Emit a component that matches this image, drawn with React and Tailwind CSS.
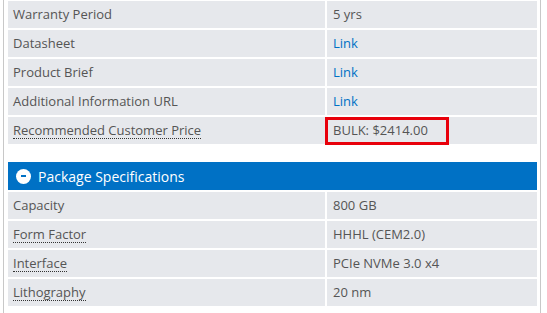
import React from "react";

const top = [
  { k: "Warranty Period", v: "5 yrs" },
  { k: "Datasheet", v: "Link", link: true },
  { k: "Product Brief", v: "Link", link: true },
  { k: "Additional Information URL", v: "Link", link: true },
  { k: "Recommended Customer Price", v: "BULK: $2414.00", dotted: true, boxed: true },
];

const pkg = [
  { k: "Capacity", v: "800 GB" },
  { k: "Form Factor", v: "HHHL (CEM2.0)", dotted: true },
  { k: "Interface", v: "PCIe NVMe 3.0 x4", dotted: true },
  { k: "Lithography", v: "20 nm", dotted: true },
];

function Row({ r }) {
  return (
    <>
      <div className="h-[27px] bg-[#e6e8ec] flex items-center pl-[5px]">
        <span
          className={
            r.dotted
              ? "leading-[15px] border-b border-dotted border-[#333]"
              : "leading-[15px]"
          }
        >
          {r.k}
        </span>
      </div>
      <div className="h-[27px] bg-[#e6e8ec] flex items-center pl-[6px] relative">
        <span className={r.link ? "text-[#0071c5]" : ""}>{r.v}</span>
        {r.boxed && (
          <div className="absolute left-[-2px] top-0 w-[124px] h-[28px] border-[3px] border-[#e8000b]" />
        )}
      </div>
    </>
  );
}

export default function App() {
  return (
    <div
      className="w-[547px] h-[313px] bg-white overflow-hidden text-[13px] text-[#555555]"
      style={{ fontFamily: '"Open Sans", "Noto Sans", sans-serif' }}
    >
      <div className="ml-[3px] w-[538px] h-[313px] border-l border-r border-[#c8c8c8] pl-[4px] pr-[3px] pt-[1px]">
        <div className="grid grid-cols-[317px_210px] gap-[2px] w-[529px]">
          {top.map((r) => (
            <Row key={r.k} r={r} />
          ))}
        </div>
        <div className="mt-[18px] h-[28px] w-[529px] bg-[#0071c5] flex items-center pl-[8px]">
          <div className="w-[15px] h-[15px] rounded-full bg-white flex items-center justify-center">
            <div className="w-[5px] h-[2px] bg-[#0071c5]" />
          </div>
          <span className="ml-[7px] text-white text-[14px]">Package Specifications</span>
        </div>
        <div className="mt-[2px] grid grid-cols-[317px_210px] gap-[2px] w-[529px]">
          {pkg.map((r) => (
            <Row key={r.k} r={r} />
          ))}
        </div>
      </div>
    </div>
  );
}
